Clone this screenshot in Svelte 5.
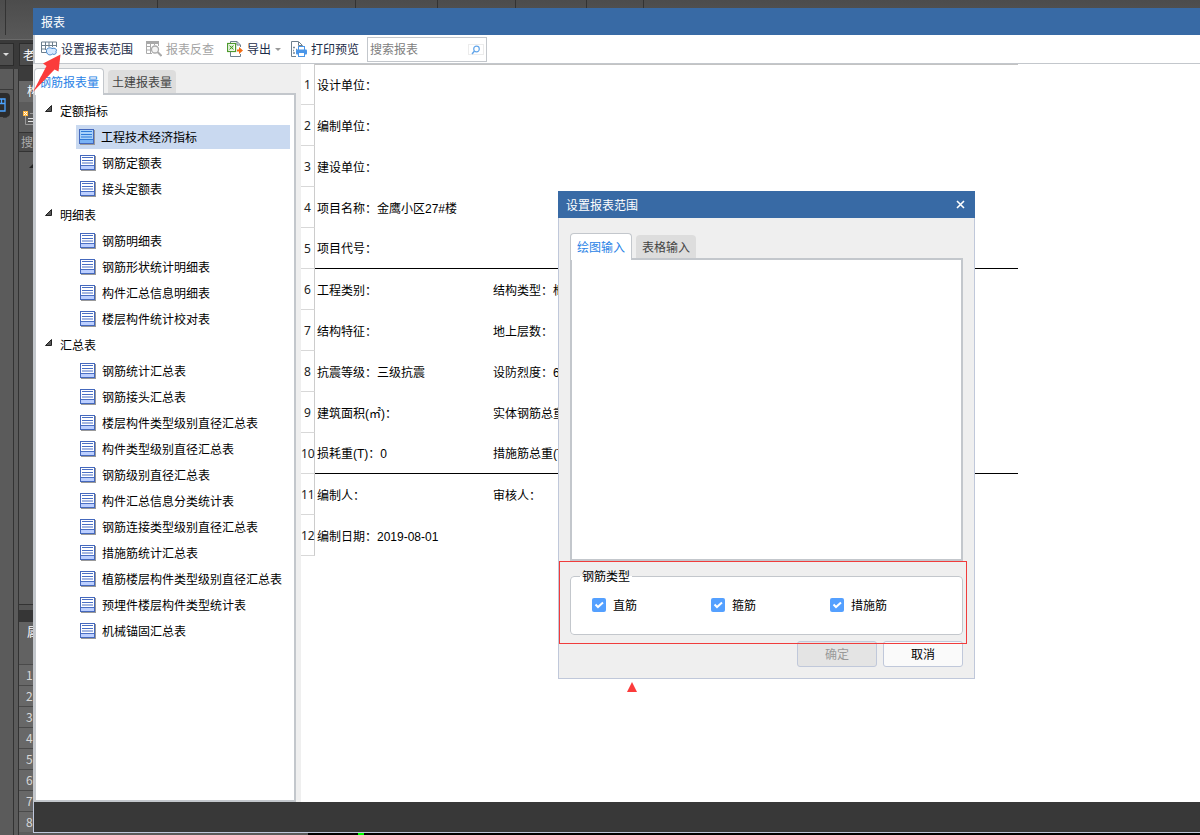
<script>
  const ribbonGroups = [6, 152, 198, 82, 78, 71, 57];
  const attributeRows = [1, 2, 3, 4, 5, 6, 7, 8];

  const groups = [
    { name: '定额指标', items: ['工程技术经济指标', '钢筋定额表', '接头定额表'] },
    { name: '明细表', items: ['钢筋明细表', '钢筋形状统计明细表', '构件汇总信息明细表', '楼层构件统计校对表'] },
    {
      name: '汇总表',
      items: [
        '钢筋统计汇总表',
        '钢筋接头汇总表',
        '楼层构件类型级别直径汇总表',
        '构件类型级别直径汇总表',
        '钢筋级别直径汇总表',
        '构件汇总信息分类统计表',
        '钢筋连接类型级别直径汇总表',
        '措施筋统计汇总表',
        '植筋楼层构件类型级别直径汇总表',
        '预埋件楼层构件类型统计表',
        '机械锚固汇总表'
      ]
    }
  ];

  const sheet = [
    ['设计单位：', ''],
    ['编制单位：', ''],
    ['建设单位：', ''],
    ['项目名称：金鹰小区27#楼', ''],
    ['项目代号：', ''],
    ['工程类别：', '结构类型：框架结构'],
    ['结构特征：', '地上层数：'],
    ['抗震等级：三级抗震', '设防烈度：6'],
    ['建筑面积(㎡)：', '实体钢筋总重(T)：'],
    ['损耗重(T)：0', '措施筋总重(T)：'],
    ['编制人：', '审核人：'],
    ['编制日期：2019-08-01', '']
  ];

  let selected = $state('工程技术经济指标');
  let query = $state('');
  let types = $state([
    { id: 'straight', label: '直筋', on: true },
    { id: 'stirrup', label: '箍筋', on: true },
    { id: 'measure', label: '措施筋', on: true }
  ]);
</script>

<div class="desktop">
  <div class="host">
    <div class="ribbon">
      {#each ribbonGroups as w}
        <div class="ribbon-group" style="width: {w}px"></div>
      {/each}
    </div>
    <div class="combos">
      <button class="combo small" aria-label="展开"><span class="caret light"></span></button>
      <button class="combo">老</button>
    </div>
    <div class="host-body">
      <div class="nav">
        <div class="nav-head"></div>
        <button class="nav-item" aria-label="构件">
          <svg width="6" height="14" viewBox="0 0 6 14"><path d="M0 1H5V13H0M0 5.500H5M1.500 1V5" fill="none" stroke="#4ba3ff" stroke-width="1.300" /></svg>
        </button>
      </div>
      <div class="panels">
        <div class="panel-gap"></div>
        <div class="panel-title">构</div>
        <div class="panel-tools">
          <svg width="16" height="18" viewBox="0 0 16 18">
            <path d="M2.500 6V14.500H16M7 3.500H16" fill="none" stroke="#9a9a9a" />
            <path d="M5 8.500H16M5 11.500H16" stroke="#e6e6e6" />
            <rect width="5" height="5" y="1" fill="#ffb640" />
            <path d="M1 2h1v1H1zM3 2h1v1H3zM2 3h1v1H2zM1 4h1v1H1zM3 4h1v1H3z" fill="#fff" />
          </svg>
        </div>
        <div class="panel-search">搜</div>
        <div class="panel-tree">
          <svg width="6" height="6" viewBox="0 0 6 6"><path d="M6 0V6H0Z" fill="#222" /></svg>
        </div>
        <div class="splitter"></div>
        <div class="attr-head">属</div>
        {#each attributeRows as n}
          <div class="attr-row">{n}</div>
        {/each}
      </div>
      <div class="canvas"><i></i></div>
    </div>
  </div>

  <section class="window">
    <header class="titlebar">报表</header>

    <div class="toolbar">
      <button class="tool range">
        <svg width="16" height="16" viewBox="0 0 16 16">
          <path d="M.500 1V11.500H5M.500 1H15.500V6M.500 4.500H15.500M.500 8H5M4.500 1V9M8 1V6M11.500 1V6" fill="none" stroke="#6d7f8d" />
          <path d="M5.500 9.500C5.500 7 9 6 11 7.500C14 6.500 16.500 8.500 15 10.500C16 13 13 14 11.500 13C9 15 5 13.500 5.500 9.500Z" fill="#d6e9ff" stroke="#3e7fc4" />
        </svg>
        <span>设置报表范围</span>
      </button>
      <button class="tool check" disabled>
        <svg width="16" height="16" viewBox="0 0 16 16">
          <path d="M0 1.500H13" stroke="#a8a8a8" stroke-width="3" />
          <path d="M.500 1V12.500H6M.500 5.500H5M.500 9H5M4.500 2V12M8.500 2V4M12.500 2V5" fill="none" stroke="#aaa" />
          <circle cx="9" cy="8.500" r="3.500" fill="#f4f4f4" stroke="#aaa" stroke-width="1.300" />
          <path d="M11.500 11L15.500 15" stroke="#aaa" stroke-width="2" />
        </svg>
        <span>报表反查</span>
      </button>
      <button class="tool export">
        <svg width="16" height="16" viewBox="0 0 16 16">
          <path d="M3.500 2V.500H10L13.500 4V6M3.500 11V15.500H13.500V13M10 .500V4H13" fill="none" stroke="#6d7f8d" />
          <rect x=".600" y="2.500" width="8" height="8" fill="#fff" stroke="#4e9a2e" stroke-width="1.200" />
          <rect x="2.500" y="4.500" width="4" height="4" fill="#b8dda5" />
          <path d="M2.500 4.500L6.500 8.500M6.500 4.500L2.500 8.500" stroke="#4e9a2e" />
          <path d="M10 8.500H12V6L16 9.500L12 13V10.500H10Z" fill="#f36c12" />
        </svg>
        <span>导出</span>
        <i class="caret"></i>
      </button>
      <button class="tool print">
        <svg width="16" height="16" viewBox="0 0 16 16">
          <path d="M5 15.500H.500V.500H7.500L11.500 4.500V6M7.500 1V4.500H11" fill="none" stroke="#6d7f8d" />
          <path d="M2 6.500H4M5 8.500H6M2 9.500H3M2 12H4" stroke="#7b8b98" stroke-width="1.500" />
          <rect x="7.500" y="5.500" width="6" height="4" fill="#fff" stroke="#4a96e8" />
          <rect x="5" y="8.500" width="11" height="5" rx="1" fill="#4a96e8" />
          <rect x="7.500" y="11.500" width="6" height="4" fill="#fff" stroke="#4a96e8" />
        </svg>
        <span>打印预览</span>
      </button>
      <div class="search">
        <input type="text" aria-label="搜索报表" placeholder="搜索报表" bind:value={query} />
        <button class="go" aria-label="搜索">
          <svg width="10" height="10" viewBox="0 0 10 10"><circle cx="5.500" cy="4" r="2.800" fill="none" stroke="#63a6ea" stroke-width="1.200" /><path d="M3.500 6L1 9" stroke="#63a6ea" stroke-width="1.400" /></svg>
        </button>
      </div>
    </div>

    <div class="content">
      <aside class="sidebar">
        <div class="tabs" role="tablist">
          <button class="tab active" role="tab" aria-selected="true">钢筋报表量</button>
          <button class="tab" role="tab" aria-selected="false">土建报表量</button>
        </div>
        <div class="tree">
          {#each groups as g}
            <div class="group">
              <svg width="7" height="7" viewBox="0 0 7 7"><path d="M6.500 .500V6.500H.500Z" fill="#5a5a5a" stroke="#222" /></svg>
              <span>{g.name}</span>
            </div>
            <ul>
              {#each g.items as item}
                <li>
                  <button class="item" class:selected={selected === item} onclick={() => (selected = item)}>
                    <svg width="16" height="16" viewBox="0 0 16 16">
                      <path d="M1 1H16V16H1Z" fill="#999" />
                      <rect x=".500" y=".500" width="14" height="14" fill={selected === item ? '#a8d2fa' : '#fff'} stroke="#4468bd" />
                      <rect x="1" y="11" width="13" height="3" fill={selected === item ? '#79b3f5' : '#bccfff'} />
                      <path d="M1 10.500H14M2 2.500H13M2 5.500H13M2 8H13" stroke={selected === item ? '#2f7bd8' : '#4a6fc4'} />
                    </svg>
                    <span>{item}</span>
                  </button>
                </li>
              {/each}
            </ul>
          {/each}
        </div>
      </aside>

      <main class="sheet">
        <table>
          <colgroup><col class="c-num" /><col class="c-a" /><col class="c-b" /></colgroup>
          <tbody>
            {#each sheet as row, i}
              <tr class:rule={i === 4 || i === 9}>
                <th scope="row">{i + 1}</th>
                <td>{row[0]}</td>
                <td>{row[1]}</td>
              </tr>
            {/each}
          </tbody>
        </table>
      </main>
    </div>
    <footer class="statusbar"></footer>
  </section>

  <div class="dialog" role="dialog" aria-labelledby="dlg-title">
    <header class="dialog-title">
      <span id="dlg-title">设置报表范围</span>
      <button class="close" aria-label="关闭">
        <svg width="9" height="9" viewBox="0 0 9 9"><path d="M1 1L8 8M8 1L1 8" stroke="#fff" stroke-width="1.600" /></svg>
      </button>
    </header>
    <div class="dialog-body">
      <div class="tabs" role="tablist">
        <button class="tab active" role="tab" aria-selected="true">绘图输入</button>
        <button class="tab" role="tab" aria-selected="false">表格输入</button>
      </div>
      <div class="pane"></div>
      <fieldset>
        <legend>钢筋类型</legend>
        {#each types as t}
          <label for={t.id}><input id={t.id} type="checkbox" bind:checked={t.on} />{t.label}</label>
        {/each}
      </fieldset>
      <div class="actions">
        <button class="btn" disabled>确定</button>
        <button class="btn">取消</button>
      </div>
    </div>
    <div class="mark-box"></div>
  </div>

  <svg class="mark-arrow" width="30" height="40" viewBox="0 0 30 40"><path d="M28.500 0.500L26.500 17.500L22.500 15.500L1 38L14.500 12L11 9.500Z" fill="#fb3b3b" /></svg>
  <svg class="mark-tip" width="10" height="10" viewBox="0 0 10 10"><path d="M5 0L10 10H0Z" fill="#fb3b3b" /></svg>
</div>

<style>
  :global(body) {
    margin: 0;
    overflow: hidden;
  }
  .desktop {
    position: relative;
    min-height: 100vh;
    overflow: hidden;
    background: #5b5b5b;
    font: 12px/16px 'Noto Sans CJK SC', sans-serif;
    color: #000;
  }
  .desktop * {
    box-sizing: border-box;
  }
  button,
  input {
    font: inherit;
    color: inherit;
    border: 0;
    padding: 0;
    margin: 0;
    background: none;
  }
  svg {
    display: block;
    flex: none;
  }

  .host {
    display: flex;
    flex-direction: column;
    height: 100vh;
    color: #d8d8d8;
  }
  .ribbon {
    display: flex;
    height: 40px;
    padding-bottom: 4px;
    background: linear-gradient(#4c4c4c, #595959);
    border-bottom: 1px solid #6a6a6a;
  }
  .ribbon-group {
    border-right: 1px solid #333;
  }
  .combos {
    display: flex;
    gap: 5px;
    height: 29px;
    padding: 3px 0;
    background: #3a3a3a;
  }
  .combo {
    width: 120px;
    padding-left: 3px;
    text-align: left;
    color: #fff;
    background: #4d4d4d;
    border: 1px solid #2c2c2c;
  }
  .combo.small {
    width: 14px;
    border-left: 0;
  }
  .caret {
    display: inline-block;
    width: 0;
    border: 3px solid transparent;
    border-top-color: #999;
    border-bottom: 0;
  }
  .caret.light {
    display: block;
    border-top-color: #ddd;
  }
  .host-body {
    display: flex;
    flex: 1;
    min-height: 0;
  }
  .nav {
    width: 14px;
    margin-right: 4px;
    border-right: 1px solid #333;
  }
  .nav-head {
    height: 21px;
    border-bottom: 1px solid #3a3a3a;
  }
  .nav-item {
    display: flex;
    align-items: center;
    width: 10px;
    height: 24px;
    margin: 3px 0;
    background: #2c2c2c;
    border-radius: 0 4px 4px 0;
    box-shadow: 0 4px 0 -3px #3a3a3a;
  }
  .panels {
    width: 290px;
    border-left: 1px solid #333;
  }
  .panel-gap {
    height: 12px;
    background: #3b3b3b;
  }
  .panel-title {
    height: 21px;
    padding: 2px 8px;
    color: #fff;
    background: #686868;
  }
  .panel-tools {
    height: 31px;
    padding: 8px 4px;
    border-bottom: 1px solid #333;
  }
  .panel-search {
    height: 19px;
    padding: 1px 2px;
    color: #aaa;
    background: #4c4c4c;
    border-bottom: 1px solid #333;
  }
  .panel-tree {
    height: 453px;
    padding: 10px;
    border-bottom: 1px solid #333;
  }
  .splitter {
    height: 17px;
    border-top: 5px solid #555;
    background: #363636;
  }
  .attr-head {
    height: 42px;
    padding: 2px 8px;
    color: #fff;
    background: #626262;
  }
  .attr-row {
    height: 21px;
    padding: 2px 7px;
    background: #686868;
    border-top: 1px solid #4a4a4a;
  }
  .canvas {
    display: flex;
    flex: 1;
    align-items: flex-end;
    padding-left: 50px;
    background: #000;
  }
  .canvas i {
    width: 6px;
    height: 2px;
    background: #0f0;
  }

  .window {
    position: absolute;
    inset: 8px 0 2px 33px;
    display: flex;
    flex-direction: column;
    background: #efefef;
  }
  .titlebar {
    height: 27px;
    padding: 6px 8px;
    color: #fff;
    background: #386aa5;
  }
  .toolbar {
    display: flex;
    align-items: center;
    height: 29px;
    padding-left: 6px;
    background: #fff;
    border-left: 2px solid #c3c7cc;
    border-bottom: 1px solid #c3c7cc;
  }
  .tool {
    display: flex;
    align-items: center;
    gap: 4px;
    margin-right: 13px;
    color: #1c2c48;
    white-space: nowrap;
  }
  .tool:disabled {
    color: #a3a3a3;
  }
  .export {
    margin-right: 10px;
  }
  .print {
    margin-right: 8px;
  }
  .search {
    display: flex;
    align-items: center;
    width: 120px;
    height: 25px;
    padding: 0 2px;
    border: 1px solid #c3c7cc;
  }
  .search input {
    flex: 1;
    min-width: 0;
    outline: 0;
  }
  .search input::placeholder {
    color: #808080;
  }
  .go {
    display: grid;
    place-items: center;
    width: 16px;
    height: 11px;
    border: 1px solid #ececec;
  }

  .content {
    display: flex;
    flex: 1;
    min-height: 0;
  }
  .sidebar {
    display: flex;
    flex-direction: column;
    width: 263px;
    margin-right: 5px;
    padding-top: 4px;
  }
  .tabs {
    display: flex;
    align-items: flex-end;
    gap: 4px;
  }
  .sidebar .tabs {
    padding-left: 1px;
  }
  .tab {
    height: 23px;
    padding: 0 4px;
    color: #444;
    background: #ddd;
    border-radius: 4px 4px 0 0;
    white-space: nowrap;
  }
  .tab.active {
    position: relative;
    height: 27px;
    margin-bottom: -2px;
    color: #2a83e6;
    background: #fff;
    border: 1px solid #c3c7cc;
    border-bottom: 0;
  }
  .tree {
    flex: 1;
    padding: 3px 4px 0 9px;
    background: #fff;
    border: 2px solid #c3c7cc;
    border-left-width: 3px;
  }
  .group {
    display: flex;
    align-items: center;
    gap: 8px;
    height: 26px;
  }
  .group svg {
    margin-bottom: 6px;
  }
  ul {
    list-style: none;
    margin: 0;
    padding: 0 0 0 31px;
  }
  li {
    padding: 1px 0;
  }
  .item {
    display: flex;
    align-items: center;
    gap: 6px;
    width: 100%;
    height: 24px;
    padding-left: 4px;
    white-space: nowrap;
  }
  .item.selected {
    padding-left: 3px;
    background: #c9d9f0;
  }

  .sheet {
    flex: 1;
    min-width: 0;
    overflow: hidden;
    background: #fff;
  }
  table {
    width: 717px;
    table-layout: fixed;
    border-collapse: separate;
    border-spacing: 0;
    font-family: 'Liberation Sans', 'Noto Sans CJK SC', sans-serif;
  }
  .c-num {
    width: 14px;
  }
  .c-a {
    width: 176px;
  }
  tr {
    height: 41px;
  }
  th {
    padding: 2px 0 0;
    font: 12px/16px 'Noto Sans', sans-serif;
    color: #222;
    text-align: center;
    border-right: 1px solid #ccc;
    border-bottom: 1px solid #d8d8d8;
  }
  td {
    padding: 2px 0 0 2px;
    white-space: nowrap;
  }
  tr:first-child td {
    border-top: 1px solid #c3c3c3;
  }
  .rule td {
    border-bottom: 1px solid #000;
  }
  .statusbar {
    height: 31px;
    background: #383838;
    border: solid #c0c8dc;
    border-width: 0 0 1px 1px;
  }

  .dialog {
    position: absolute;
    left: 558px;
    top: 191px;
    width: 417px;
    background: #efefef;
    border: 1px solid #c0c8da;
    border-top: 0;
  }
  .dialog-title {
    display: flex;
    align-items: center;
    justify-content: space-between;
    height: 27px;
    margin: 0 -1px;
    padding: 0 10px 0 8px;
    color: #fff;
    background: #386aa5;
  }
  .dialog-body {
    padding: 15px 11px 11px;
  }
  .dialog .tab {
    padding: 0 6px;
  }
  .dialog .tab.active {
    padding: 0 6px;
  }
  .pane {
    height: 303px;
    background: #fff;
    border: 2px solid #c3c7cc;
  }
  fieldset {
    display: flex;
    min-width: 0;
    height: 67px;
    margin: 7px 0 6px;
    padding: 13px 0 0 21px;
    background: #fff;
    border: 1px solid #c3c7cc;
    border-radius: 4px;
  }
  legend {
    margin-left: -12px;
    padding: 0 2px;
  }
  label {
    display: flex;
    align-items: center;
    gap: 7px;
    width: 119px;
    height: 16px;
  }
  input[type='checkbox'] {
    appearance: none;
    width: 14px;
    height: 14px;
    border-radius: 2px;
    border: 1px solid #999;
  }
  input[type='checkbox']:checked {
    border: 0;
    background: #54a0ff
      url("data:image/svg+xml,%3Csvg xmlns='http://www.w3.org/2000/svg' viewBox='0 0 14 14'%3E%3Cpath d='M3.500 6.500L6 9L11 4.500' fill='none' stroke='white' stroke-width='2'/%3E%3C/svg%3E");
  }
  .actions {
    display: flex;
    justify-content: flex-end;
    gap: 6px;
  }
  .btn {
    width: 80px;
    height: 26px;
    background: #fafafa;
    border: 1px solid #c0c8da;
    border-radius: 3px;
  }
  .btn:disabled {
    color: #999;
    background: #e4e4e4;
  }
  .mark-box {
    position: absolute;
    inset: 370px 7px 34px 0;
    border: 1px solid #f03c3c;
    pointer-events: none;
  }
  .mark-arrow {
    position: absolute;
    left: 32px;
    top: 54px;
  }
  .mark-tip {
    position: absolute;
    left: 627px;
    top: 682px;
  }
</style>
